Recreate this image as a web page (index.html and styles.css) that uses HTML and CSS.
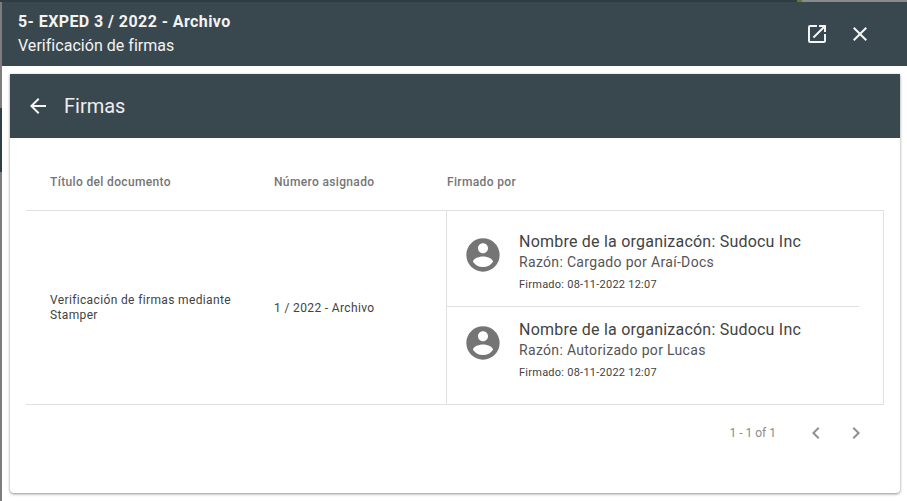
FILE: index.html
```html
<!DOCTYPE html>
<html lang="es">
<head>
<meta charset="utf-8">
<title>Verificación de firmas</title>
<link rel="stylesheet" href="styles.css">
</head>
<body>
<div class="dialog">
  <header class="dialog-head">
    <div class="dialog-titles">
      <div class="dialog-title">5- EXPED 3 / 2022 - Archivo</div>
      <div class="dialog-sub">Verificación de firmas</div>
    </div>
    <svg class="icon icon-open" viewBox="0 0 24 24"><path d="M19 19H5V5h7V3H5a2 2 0 0 0-2 2v14a2 2 0 0 0 2 2h14c1.100 0 2-.9 2-2v-7h-2v7zM14 3v2h3.590l-9.830 9.830 1.410 1.410L19 6.410V10h2V3h-7z"/></svg>
    <svg class="icon icon-close" viewBox="0 0 24 24"><path d="M19 6.410 17.590 5 12 10.590 6.410 5 5 6.410 10.590 12 5 17.590 6.410 19 12 13.410 17.590 19 19 17.590 13.410 12z"/></svg>
  </header>
  <div class="dialog-body">
    <section class="card">
      <div class="card-head">
        <svg class="icon icon-back" viewBox="0 0 24 24"><path d="M20 11H7.830l5.590-5.590L12 4l-8 8 8 8 1.410-1.410L7.830 13H20v-2z"/></svg>
        <h1 class="card-title">Firmas</h1>
      </div>
      <div class="card-content">
        <div class="table">
          <div class="thead">
            <div class="th col-title">Título del documento</div>
            <div class="th col-number">Número asignado</div>
            <div class="th col-signers">Firmado por</div>
          </div>
          <div class="tbody">
            <div class="td col-title">Verificación de firmas mediante Stamper</div>
            <div class="td col-number">1 / 2022 - Archivo</div>
            <div class="td-signers">
              <div class="signer">
                <svg class="avatar" viewBox="0 0 24 24"><path d="M12 2C6.480 2 2 6.480 2 12s4.480 10 10 10 10-4.480 10-10S17.520 2 12 2zm0 3c1.660 0 3 1.340 3 3s-1.340 3-3 3-3-1.340-3-3 1.340-3 3-3zm0 14.200c-2.500 0-4.710-1.280-6-3.220.030-1.990 4-3.080 6-3.080 1.990 0 5.970 1.090 6 3.080-1.290 1.940-3.500 3.220-6 3.220z"/></svg>
                <div class="signer-text">
                  <div class="signer-org">Nombre de la organizacón: Sudocu Inc</div>
                  <div class="signer-reason">Razón: Cargado por Araí-Docs</div>
                  <div class="signer-date">Firmado: 08-11-2022 12:07</div>
                </div>
              </div>
              <div class="signer">
                <svg class="avatar" viewBox="0 0 24 24"><path d="M12 2C6.480 2 2 6.480 2 12s4.480 10 10 10 10-4.480 10-10S17.520 2 12 2zm0 3c1.660 0 3 1.340 3 3s-1.340 3-3 3-3-1.340-3-3 1.340-3 3-3zm0 14.200c-2.500 0-4.710-1.280-6-3.220.030-1.990 4-3.080 6-3.080 1.990 0 5.970 1.090 6 3.080-1.290 1.940-3.500 3.220-6 3.220z"/></svg>
                <div class="signer-text">
                  <div class="signer-org">Nombre de la organizacón: Sudocu Inc</div>
                  <div class="signer-reason">Razón: Autorizado por Lucas</div>
                  <div class="signer-date">Firmado: 08-11-2022 12:07</div>
                </div>
              </div>
            </div>
          </div>
          <div class="pager">
            <span class="pager-range">1 - 1 of 1</span>
            <svg class="icon-page" viewBox="0 0 24 24"><path d="M15.410 7.410 14 6l-6 6 6 6 1.410-1.410L10.830 12z"/></svg>
            <svg class="icon-page" viewBox="0 0 24 24"><path d="M10 6 8.590 7.410 13.170 12l-4.580 4.590L10 18l6-6z"/></svg>
          </div>
        </div>
      </div>
    </section>
  </div>
</div>
</body>
</html>
```

FILE: styles.css
```css
html, body {
  margin: 0;
  height: 100%;
  overflow: hidden;
}

body {
  padding: 2px 0 0 2px;
  box-sizing: border-box;
  font-family: Roboto, "Liberation Sans", sans-serif;
  color: #3c3c3c;
  background:
    linear-gradient(to right, #2f3c40 0, #2f3c40 797px, #5d7a2e 797px, #5d7a2e 802px, #8a8a8a 802px) top left / 100% 2px no-repeat,
    linear-gradient(to bottom, #7d7d7d 0, #7d7d7d 108px, #2f3f47 108px, #2f3f47 172px, #7d7d7d 172px) top left / 2px 100% no-repeat,
    #fff;
}

.dialog {
  height: 499px;
  background: #fff;
  display: flex;
  flex-direction: column;
}

.dialog-head {
  height: 64px;
  flex: none;
  background: #39474f;
  color: #fff;
  display: flex;
  align-items: center;
  padding: 0 35px 0 16px;
  box-sizing: border-box;
}

.dialog-titles {
  flex: 1;
  padding-top: 2px;
}

.dialog-title {
  font-size: 16px;
  font-weight: 700;
  line-height: 20px;
  letter-spacing: 0.42px;
  color: #f3f3f3;
}

.dialog-sub {
  font-size: 16px;
  line-height: 24px;
  letter-spacing: 0.03px;
  margin-top: 2px;
  color: #f3f3f3;
}

.icon {
  fill: #f5f5f5;
  display: block;
}

.icon-open {
  width: 24px;
  height: 24px;
  margin-right: 19px;
}

.icon-close {
  width: 24px;
  height: 24px;
}

.dialog-body {
  flex: 1;
  padding: 8px 7px 8px 8px;
  display: flex;
  min-height: 0;
}

.card {
  flex: 1;
  background: #fff;
  border-radius: 0 0 4px 4px;
  box-shadow: 0 1px 3px rgba(0,0,0,.45);
  display: flex;
  flex-direction: column;
}

.card-head {
  height: 64px;
  flex: none;
  background: #39474f;
  display: flex;
  align-items: center;
  padding-left: 16px;
}

.icon-back {
  width: 24px;
  height: 24px;
  margin-right: 14px;
}

.card-title {
  margin: 0;
  font-size: 20px;
  font-weight: 400;
  color: #eeeeee;
}

.card-content {
  flex: 1;
  padding-left: 16px;
}

.table {
  width: 858px;
}

.thead {
  display: flex;
  height: 72px;
  align-items: flex-end;
  border-bottom: 1px solid #e0e0e0;
}

.th {
  font-size: 12px;
  line-height: 16px;
  font-weight: 500;
  letter-spacing: 0.35px;
  color: #757575;
  padding-bottom: 20px;
}

.col-title {
  width: 248px;
  padding-left: 24px;
  box-sizing: border-box;
  flex: none;
}

.col-number {
  width: 172px;
  flex: none;
}

.th.col-signers {
  flex: 1;
  padding-left: 1px;
}

.tbody {
  display: flex;
  align-items: stretch;
  border-bottom: 1px solid #e0e0e0;
}

.td {
  font-size: 12px;
  line-height: 15px;
  letter-spacing: 0.36px;
  color: #424242;
  align-self: center;
}

.tbody .col-title {
  padding-right: 12px;
}

.tbody .col-number {
  margin-top: 2px;
}

.td-signers {
  flex: 1;
  border-left: 1px solid #e0e0e0;
  border-right: 1px solid #e0e0e0;
}

.signer {
  height: 95px;
  box-sizing: border-box;
  margin-right: 24px;
  display: flex;
  align-items: flex-start;
  padding: 21px 0 0 16px;
}

.signer + .signer {
  border-top: 1px solid #e0e0e0;
  height: 98px;
  padding-top: 13px;
}

.avatar {
  width: 40px;
  height: 40px;
  fill: #757575;
  flex: none;
  margin: 3px 16px 0 0;
}

.signer-org {
  font-size: 16px;
  line-height: 20px;
  letter-spacing: 0.22px;
  color: #424242;
}

.signer-reason {
  font-size: 14px;
  line-height: 20px;
  letter-spacing: 0.32px;
  color: #555;
}

.signer-date {
  font-size: 11px;
  line-height: 14px;
  letter-spacing: 0.25px;
  color: #424242;
  margin-top: 6px;
}

.pager {
  height: 56px;
  display: flex;
  align-items: center;
  justify-content: flex-end;
  padding-right: 16px;
}

.pager-range {
  font-size: 12px;
  color: #8a8a8a;
  margin-right: 28px;
}

.icon-page {
  width: 24px;
  height: 24px;
  fill: #8f8f8f;
}

.icon-page + .icon-page {
  margin-left: 16px;
}
```
